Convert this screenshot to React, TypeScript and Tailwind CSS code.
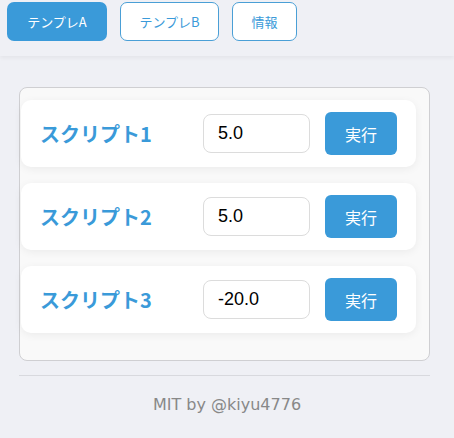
const scripts = [
  { name: 'スクリプト1', value: '5.0' },
  { name: 'スクリプト2', value: '5.0' },
  { name: 'スクリプト3', value: '-20.0' },
];

const jp = '[font-family:"Noto_Sans_CJK_JP","Noto_Sans",sans-serif]';

export default function App() {
  return (
    <div className="min-h-[438px] bg-[#eff0f5] [font-family:'Noto_Sans_CJK_JP',sans-serif]">
      {/* tabs */}
      <header className="flex h-[56px] gap-[13px] px-[7px] pt-[2px] shadow-[0_2px_4px_rgba(0,0,0,0.05)]">
        <button className="h-[39px] w-[100px] rounded-[7px] bg-[#3a9ad9] text-[13px] text-white">
          テンプレA
        </button>
        <button className="h-[39px] w-[99px] rounded-[7px] border border-[#4a9fd6] bg-white text-[13px] text-[#3a9ad9]">
          テンプレB
        </button>
        <button className="h-[39px] w-[65px] rounded-[7px] border border-[#4a9fd6] bg-white text-[13px] text-[#3a9ad9]">
          情報
        </button>
      </header>

      <main className="px-[19px] pt-[31px]">
        <div className="flex w-[411px] flex-col gap-[16px] rounded-[8px] border border-[#cfcfd2] bg-[#f9f9f9] pb-[27px] pl-[1px] pt-[12px]">
          {scripts.map((s) => (
            <div
              key={s.name}
              className="flex h-[67px] w-[395px] items-center rounded-[10px] bg-white pl-[19px] shadow-[0_2px_8px_rgba(0,0,0,0.06)]"
            >
              <span className={`w-[163px] text-[20px] font-bold text-[#3a9ad9] ${jp}`}>{s.name}</span>
              <input
                defaultValue={s.value}
                className="h-[39px] w-[107px] rounded-[8px] border border-[#dcdcdc] bg-white px-[14px] text-[18px] text-black outline-none [font-family:'Liberation_Sans',sans-serif]"
              />
              <button className="ml-[15px] h-[43px] w-[72px] rounded-[6px] bg-[#3a9ad9] text-[16px] text-white">
                実行
              </button>
            </div>
          ))}
        </div>

        <hr className="mt-[14px] w-[411px] border-t border-[#d8d9de]" />

        <p className="mt-[17px] text-center text-[16px] text-[#888] [font-family:'DejaVu_Sans',sans-serif]">
          MIT by @kiyu4776
        </p>
      </main>
    </div>
  );
}
